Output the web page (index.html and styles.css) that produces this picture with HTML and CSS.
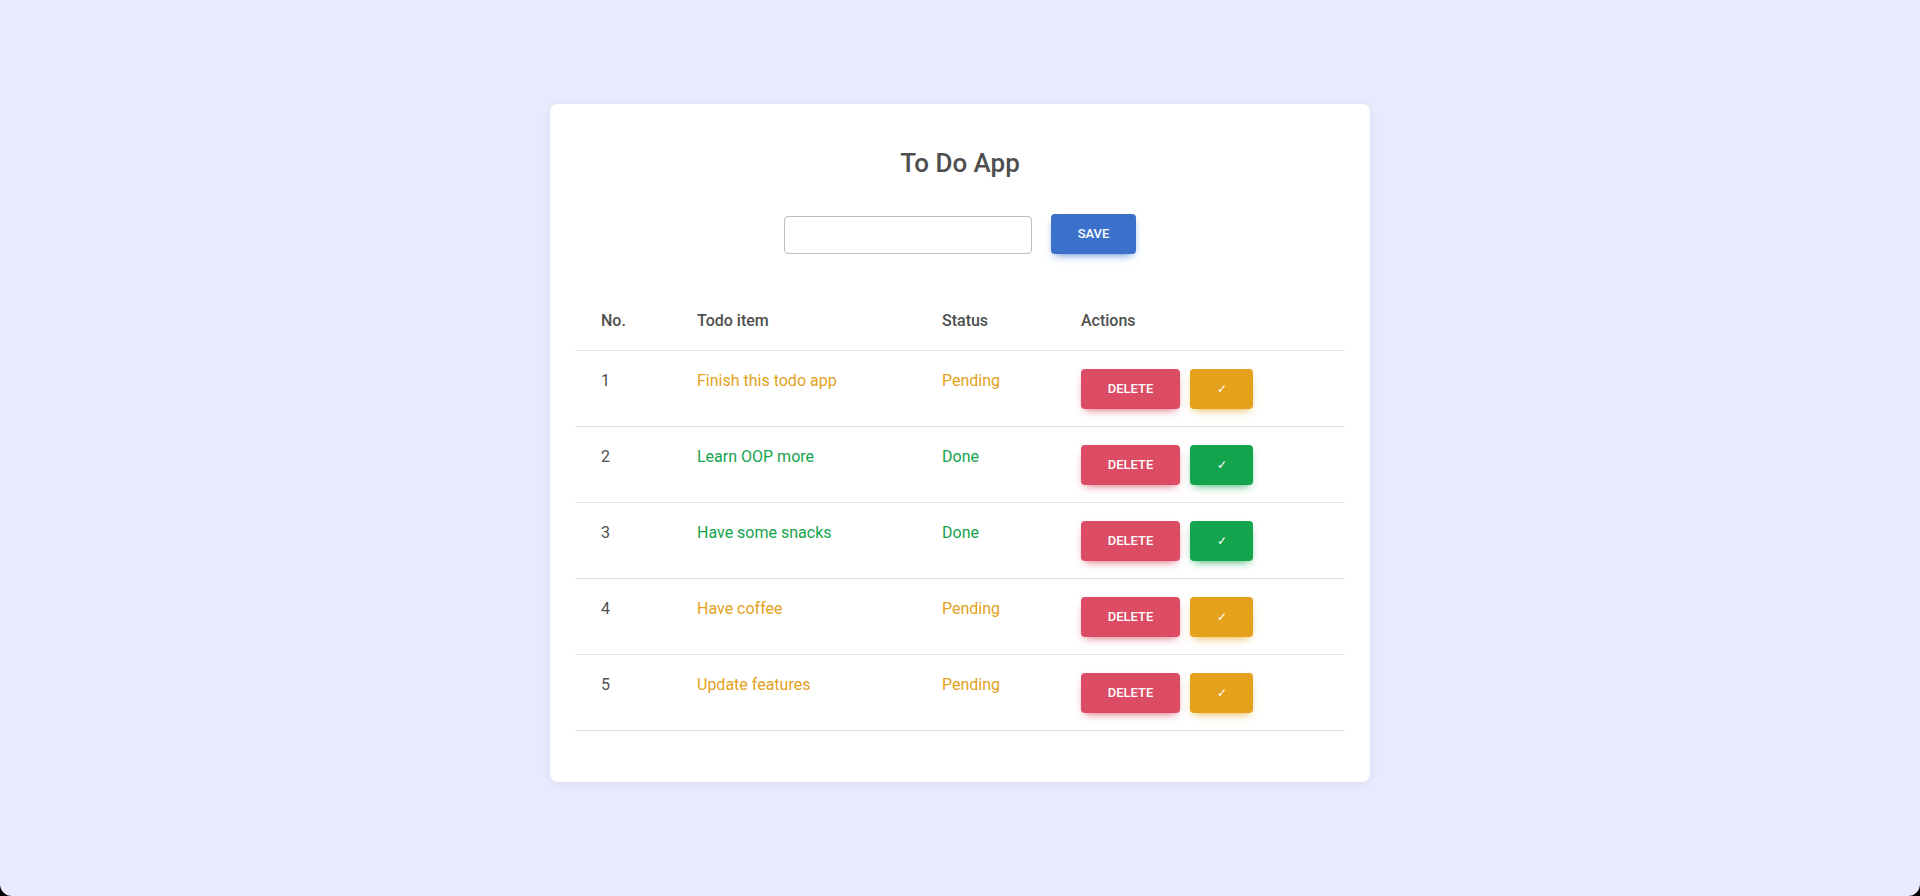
FILE: index.html
```html
<!DOCTYPE html>
<html lang="en">
<head>
<meta charset="utf-8">
<title>To Do App</title>
<link rel="stylesheet" href="styles.css">
</head>
<body>
<main class="page">
  <section class="card">
    <h1 class="title">To Do App</h1>
    <form class="entry" onsubmit="return false">
      <input class="entry-input" type="text" aria-label="Todo item">
      <button class="btn btn-primary" type="submit">Save</button>
    </form>
    <table class="todo-table">
      <colgroup>
        <col class="col-no"><col class="col-item"><col class="col-status"><col class="col-actions">
      </colgroup>
      <thead>
        <tr><th>No.</th><th>Todo item</th><th>Status</th><th>Actions</th></tr>
      </thead>
      <tbody>
        <tr class="pending"><td class="num">1</td><td>Finish this todo app</td><td>Pending</td><td><div class="actions"><button class="btn btn-danger">Delete</button><button class="btn btn-warning">✓</button></div></td></tr>
        <tr class="done"><td class="num">2</td><td>Learn OOP more</td><td>Done</td><td><div class="actions"><button class="btn btn-danger">Delete</button><button class="btn btn-success">✓</button></div></td></tr>
        <tr class="done"><td class="num">3</td><td>Have some snacks</td><td>Done</td><td><div class="actions"><button class="btn btn-danger">Delete</button><button class="btn btn-success">✓</button></div></td></tr>
        <tr class="pending"><td class="num">4</td><td>Have coffee</td><td>Pending</td><td><div class="actions"><button class="btn btn-danger">Delete</button><button class="btn btn-warning">✓</button></div></td></tr>
        <tr class="pending"><td class="num">5</td><td>Update features</td><td>Pending</td><td><div class="actions"><button class="btn btn-danger">Delete</button><button class="btn btn-warning">✓</button></div></td></tr>
      </tbody>
    </table>
  </section>
</main>
</body>
</html>
```

FILE: styles.css
```css
html {
  background: #000;
  height: 100%;
}
body {
  margin: 0;
  min-height: 100%;
  background: #e9eafd;
  border-radius: 0 0 12px 12px;
  font-family: Roboto, "Liberation Sans", sans-serif;
  color: #4f4f4f;
}
.page {
  display: flex;
  justify-content: center;
  padding-top: 104px;
}
.card {
  width: 770px;
  background: #fff;
  border-radius: 8px;
  box-shadow: 0 2px 12px rgba(0, 0, 0, 0.06);
  padding: 44px 25px 51px;
}
.title {
  margin: 0;
  text-align: center;
  font-size: 26px;
  line-height: 30px;
  font-weight: 500;
  color: #4f4f4f;
}
.entry {
  display: flex;
  justify-content: center;
  align-items: center;
  gap: 19px;
  margin-top: 36px;
}
.entry-input {
  width: 248px;
  height: 38px;
  box-sizing: border-box;
  border: 1px solid #bdbdbd;
  border-radius: 4px;
  font: inherit;
  padding: 0 10px;
  margin-top: 1px;
}
.btn {
  border: 0;
  border-radius: 4px;
  color: #fff;
  font-family: Roboto, "Liberation Sans", sans-serif;
  font-size: 13px;
  font-weight: 500;
  text-transform: uppercase;
  line-height: 18px;
  padding: 11px 0;
  cursor: pointer;
}
.btn-primary {
  background: #3b71ca;
  box-shadow: 0 4px 9px -4px #3b71ca;
  width: 85px;
}
.btn-danger {
  background: #dc4c64;
  box-shadow: 0 4px 9px -4px #dc4c64;
  width: 99px;
}
.btn-warning {
  background: #e4a11b;
  box-shadow: 0 4px 9px -4px #e4a11b;
  width: 63px;
  font-size: 12px;
}
.btn-success {
  background: #14a44d;
  box-shadow: 0 4px 9px -4px #14a44d;
  width: 63px;
  font-size: 12px;
}
.todo-table {
  width: 100%;
  table-layout: fixed;
  margin-top: 37px;
  border-collapse: collapse;
  font-size: 16px;
  line-height: 24px;
}
.col-no { width: 96px; }
.col-item { width: 245px; }
.col-status { width: 139px; }
.todo-table th {
  text-align: left;
  font-weight: 500;
  color: #4f4f4f;
  padding: 18px 26px 17px;
  border-bottom: 1px solid #e0e0e0;
  vertical-align: top;
}
.todo-table td {
  padding: 18px 26px 17px;
  border-bottom: 1px solid #e0e0e0;
  vertical-align: top;
}
.todo-table td.num { color: #4f4f4f; }
.pending td { color: #e4a11b; }
.done td { color: #14a44d; }
.actions {
  display: flex;
  gap: 10px;
}
```
